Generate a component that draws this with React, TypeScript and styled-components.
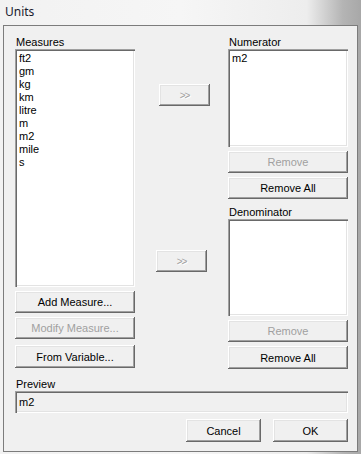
import React from 'react';
import styled, { createGlobalStyle } from 'styled-components';

const GlobalStyle = createGlobalStyle`
  html, body {
    margin: 0;
    padding: 0;
    background: #f0f0f0;
  }
  * {
    box-sizing: border-box;
  }
`;

const Window = styled.div`
  width: 361px;
  height: 454px;
  display: flex;
  flex-direction: column;
  background: linear-gradient(90deg, #f2f2f2 0%, #f6f6f6 50%, #ededed 85%, #b4b4b4 95%, #a8a8a8 100%);
  font-family: "Liberation Sans", Arial, sans-serif;
  font-size: 11px;
  color: #000;
`;

const TitleBar = styled.div`
  height: 25px;
  padding: 5px 0 0 5px;
  font-family: "Noto Sans", "Liberation Sans", sans-serif;
  font-size: 12px;
  line-height: 14px;
  color: #1a1a2e;
`;

const Client = styled.div`
  margin: 0 3px 2px 3px;
  height: 427px;
  background: #f0f0f0;
  border: 1px solid #7c7c7c;
  padding: 10px 9px 0 11px;
  display: flex;
  flex-direction: column;
`;

const TopRow = styled.div`
  display: flex;
`;

const Column = styled.div<{ $width: number }>`
  width: ${({ $width }) => $width}px;
  display: flex;
  flex-direction: column;
  align-items: flex-start;
`;

const Label = styled.div<{ $top?: number }>`
  height: 13px;
  line-height: 13px;
  padding-left: 1px;
  margin-top: ${({ $top }) => $top ?? 0}px;
  white-space: nowrap;
`;

const ListBox = styled.div<{ $height: number }>`
  width: 120px;
  height: ${({ $height }) => $height}px;
  background: #fff;
  padding: 3px 4px;
  box-shadow: inset 1px 1px #a0a0a0, inset 2px 2px #696969, inset -1px -1px #fff, inset -2px -2px #e3e3e3;
`;

const ListItem = styled.div`
  height: 13px;
  line-height: 13px;
  white-space: nowrap;
`;

const Button = styled.button<{ $width?: number; $height?: number; $top?: number; $left?: number }>`
  width: ${({ $width }) => $width ?? 120}px;
  height: ${({ $height }) => $height ?? 22}px;
  margin: ${({ $top }) => $top ?? 0}px 0 0 ${({ $left }) => $left ?? 0}px;
  padding: 0;
  border: none;
  background: #f0f0f0;
  font-family: "Liberation Sans", Arial, sans-serif;
  font-size: 11px;
  color: #000;
  box-shadow: inset -1px -1px #696969, inset 1px 1px #fff, inset -2px -2px #a0a0a0, inset 2px 2px #e3e3e3;

  &:disabled {
    color: #a0a0a0;
  }
`;

const Arrows = styled.span`
  font-size: 10px;
  letter-spacing: -1px;
  color: #a0a0a0;
  text-shadow: 1px 1px #fff;
`;

const PreviewField = styled.div`
  width: 333px;
  height: 22px;
  line-height: 22px;
  padding-left: 4px;
  background: #f0f0f0;
  box-shadow: inset 1px 1px #a0a0a0, inset 2px 2px #696969, inset -1px -1px #fff, inset -2px -2px #e3e3e3;
`;

const Footer = styled.div`
  display: flex;
  justify-content: flex-end;
  gap: 12px;
  width: 333px;
  margin-top: 6px;
`;

const measures = ['ft2', 'gm', 'kg', 'km', 'litre', 'm', 'm2', 'mile', 's'];

export default function App() {
  return (
    <>
      <GlobalStyle />
      <Window>
        <TitleBar>Units</TitleBar>
        <Client>
          <TopRow>
            <Column $width={120}>
              <Label>Measures</Label>
              <ListBox $height={238}>
                {measures.map((m) => (
                  <ListItem key={m}>{m}</ListItem>
                ))}
              </ListBox>
              <Button $top={4}>Add Measure...</Button>
              <Button $top={4} disabled>Modify Measure...</Button>
              <Button $top={6} $height={23}>From Variable...</Button>
            </Column>
            <Column $width={93}>
              <Button disabled $width={51} $top={48} $left={24}>
                <Arrows>&gt;&gt;</Arrows>
              </Button>
              <Button disabled $width={51} $top={144} $left={21}>
                <Arrows>&gt;&gt;</Arrows>
              </Button>
            </Column>
            <Column $width={120}>
              <Label>Numerator</Label>
              <ListBox $height={98}>
                <ListItem>m2</ListItem>
              </ListBox>
              <Button $top={4} disabled>Remove</Button>
              <Button $top={4}>Remove All</Button>
              <Label $top={7}>Denominator</Label>
              <ListBox $height={97} />
              <Button $top={4} disabled>Remove</Button>
              <Button $top={4} $height={23}>Remove All</Button>
            </Column>
          </TopRow>
          <Label $top={9}>Preview</Label>
          <PreviewField>m2</PreviewField>
          <Footer>
            <Button $width={75} $height={23}>Cancel</Button>
            <Button $width={75} $height={23}>OK</Button>
          </Footer>
        </Client>
      </Window>
    </>
  );
}
